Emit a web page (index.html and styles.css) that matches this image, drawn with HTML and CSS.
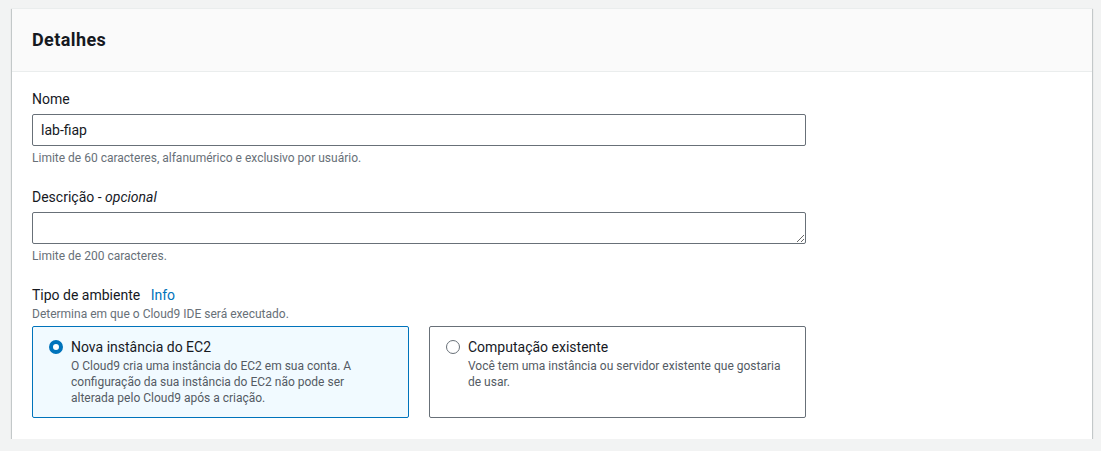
FILE: index.html
```html
<!DOCTYPE html>
<html lang="pt-BR">
<head>
<meta charset="utf-8">
<title>Detalhes</title>
<link rel="stylesheet" href="styles.css">
</head>
<body>
<section class="card">
  <header class="card-header">
    <h2 class="card-title">Detalhes</h2>
  </header>
  <div class="card-body">
    <div class="field">
      <label class="label" for="nome">Nome</label>
      <input class="input" id="nome" type="text" value="lab-fiap">
      <div class="hint">Limite de 60 caracteres, alfanumérico e exclusivo por usuário.</div>
    </div>
    <div class="field">
      <label class="label" for="desc">Descrição - <i>opcional</i></label>
      <textarea class="textarea" id="desc"></textarea>
      <div class="hint">Limite de 200 caracteres.</div>
    </div>
    <div class="field">
      <div class="label">Tipo de ambiente <a class="info" href="#">Info</a></div>
      <div class="desc">Determina em que o Cloud9 IDE será executado.</div>
      <div class="tiles">
        <div class="tile tile-selected">
          <span class="radio radio-on"></span>
          <div class="tile-text">
            <div class="tile-title">Nova instância do EC2</div>
            <div class="tile-desc">O Cloud9 cria uma instância do EC2 em sua conta. A configuração da sua instância do EC2 não pode ser alterada pelo Cloud9 após a criação.</div>
          </div>
        </div>
        <div class="tile">
          <span class="radio"></span>
          <div class="tile-text">
            <div class="tile-title">Computação existente</div>
            <div class="tile-desc">Você tem uma instância ou servidor existente que gostaria de usar.</div>
          </div>
        </div>
      </div>
    </div>
  </div>
</section>
</body>
</html>
```

FILE: styles.css
```css
* { box-sizing: border-box; }
html, body { margin: 0; }
body {
  background: #f2f3f3;
  padding: 8px 9px 0 12px;
  font-family: Roboto, "Liberation Sans", sans-serif;
  color: #16191f;
  font-size: 14px;
  line-height: 22px;
}
.card {
  background: #fff;
  box-shadow: 0 1px 1px 0 rgba(0,28,36,0.3), 1px 1px 1px 0 rgba(0,28,36,0.15), -1px 1px 1px 0 rgba(0,28,36,0.15);
  border-top: 1px solid #eaeded;
}
.card-header {
  background: #fafafa;
  border-bottom: 1px solid #eaeded;
  padding: 18px 20px 18px;
}
.card-title {
  margin: 0;
  font-size: 18px;
  line-height: 26px;
  font-weight: 700;
  letter-spacing: 0.4px;
}
.card-body {
  padding: 16px 20px 21px;
  display: flex;
  flex-direction: column;
  gap: 20px;
}
.field {
  display: flex;
  flex-direction: column;
  max-width: 774px;
}
.label {
  font-size: 14px;
  line-height: 22px;
  margin-bottom: 4px;
}
.info {
  color: #0073bb;
  text-decoration: none;
  margin-left: 7px;
}
.input, .textarea {
  font-family: inherit;
  font-size: 14px;
  color: #16191f;
  border: 1px solid #687078;
  border-radius: 2px;
  background: #fff;
  padding: 4px 8px;
  width: 100%;
  height: 32px;
  line-height: 22px;
  margin: 0;
  outline: none;
}
.textarea {
  display: block;
  resize: vertical;
}
.hint {
  font-size: 12px;
  line-height: 16px;
  color: #687078;
  margin-top: 4px;
}
.desc {
  font-size: 12px;
  line-height: 16px;
  color: #687078;
  margin-top: -4px;
  margin-bottom: 4px;
}
.tiles {
  display: grid;
  grid-template-columns: 1fr 1fr;
  gap: 20px;
}
.tile {
  display: flex;
  align-items: flex-start;
  gap: 8px;
  border: 1px solid #687078;
  border-radius: 2px;
  background: #fff;
  padding: 9px 20px 11px 16px;
}
.tile-selected {
  border-color: #0073bb;
  background: #f1faff;
}
.radio {
  flex: none;
  width: 14px;
  height: 14px;
  margin-top: 4px;
  border-radius: 50%;
  border: 1.5px solid #687078;
  background: #fff;
}
.radio-on {
  border: 4px solid #0073bb;
}
.tile-title {
  font-size: 14px;
  line-height: 22px;
}
.tile-desc {
  font-size: 12px;
  line-height: 16px;
  color: #545b64;
}
```
